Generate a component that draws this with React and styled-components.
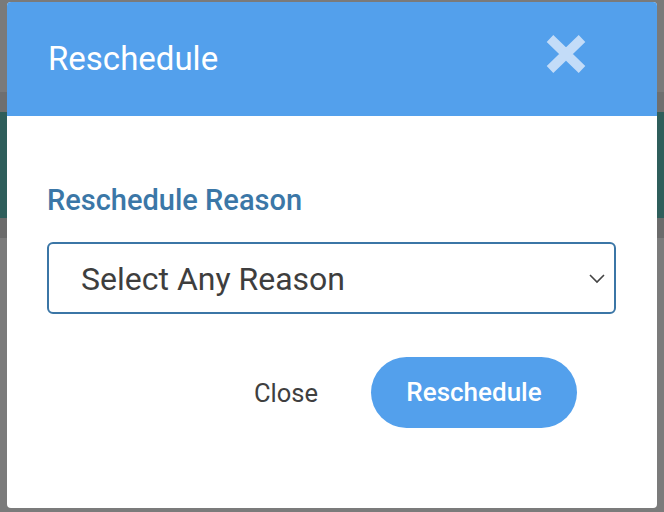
import React from "react";
import styled, { createGlobalStyle } from "styled-components";

const Global = createGlobalStyle`
  html, body { margin: 0; padding: 0; }
  body {
    font-family: Roboto, "Liberation Sans", Arial, sans-serif;
    background: linear-gradient(
      to bottom,
      #7a7a7a 0px, #7a7a7a 92px,
      #6f6f6f 92px, #6f6f6f 112px,
      #2f5e5b 112px, #2f5e5b 218px,
      #6b6b6b 218px, #6b6b6b 238px,
      #7b7b7b 238px
    );
    min-height: 512px;
  }
`;

const Backdrop = styled.div`
  padding: 2px 7px 4px 7px;
  height: 512px;
  box-sizing: border-box;
`;

const Modal = styled.div`
  width: 650px;
  height: 506px;
  background: #ffffff;
  border-radius: 4px;
  overflow: hidden;
  display: flex;
  flex-direction: column;
`;

const Header = styled.div`
  height: 114px;
  background: #53a0ec;
  display: flex;
  align-items: center;
  justify-content: space-between;
  padding: 0 71px 0 41px;
  box-sizing: border-box;
`;

const Title = styled.h1`
  margin: 0;
  font-size: 33px;
  font-weight: 400;
  color: #ffffff;
  line-height: 1.2;
`;

const CloseIcon = styled.button`
  border: 0;
  background: transparent;
  padding: 0;
  width: 40px;
  height: 38px;
  margin-bottom: 10px;
  display: flex;
  cursor: pointer;
`;

const Body = styled.div`
  padding: 67px 41px 0 40px;
  display: flex;
  flex-direction: column;
`;

const Label = styled.label`
  font-size: 29px;
  font-weight: 500;
  color: #3b77a7;
  line-height: 1.2;
`;

const SelectBox = styled.div`
  margin-top: 24px;
  height: 72px;
  border: 2px solid #3b76a6;
  border-radius: 6px;
  box-sizing: border-box;
  display: flex;
  align-items: center;
  justify-content: space-between;
  padding: 2px 9px 0 32px;
`;

const SelectText = styled.span`
  font-size: 32px;
  color: #3e3e3e;
`;

const Actions = styled.div`
  margin-top: 43px;
  margin-right: 39px;
  display: flex;
  justify-content: flex-end;
  align-items: center;
  gap: 53px;
`;

const TextButton = styled.button`
  border: 0;
  background: transparent;
  padding: 0;
  font-family: inherit;
  font-size: 25.5px;
  color: #3f3f3f;
  margin-top: 1px;
`;

const PrimaryButton = styled.button`
  border: 0;
  height: 71px;
  width: 206px;
  border-radius: 36px;
  background: #53a0ec;
  color: #ffffff;
  font-family: inherit;
  font-size: 26px;
  font-weight: 500;
  padding: 0;
`;

export default function App() {
  return (
    <>
      <Global />
      <Backdrop>
        <Modal>
          <Header>
            <Title>Reschedule</Title>
            <CloseIcon aria-label="close">
              <svg width="40" height="38" viewBox="0 0 40 38">
                <path
                  d="M4 3.5 L36 34.5 M36 3.5 L4 34.5"
                  stroke="#c3dcf8"
                  strokeWidth="9.5"
                  strokeLinecap="butt"
                  fill="none"
                />
              </svg>
            </CloseIcon>
          </Header>
          <Body>
            <Label>Reschedule Reason</Label>
            <SelectBox>
              <SelectText>Select Any Reason</SelectText>
              <svg width="16" height="10" viewBox="0 0 16 10">
                <path d="M1 1 L8 8 L15 1" stroke="#444" strokeWidth="1.6" fill="none" />
              </svg>
            </SelectBox>
            <Actions>
              <TextButton>Close</TextButton>
              <PrimaryButton>Reschedule</PrimaryButton>
            </Actions>
          </Body>
        </Modal>
      </Backdrop>
    </>
  );
}
